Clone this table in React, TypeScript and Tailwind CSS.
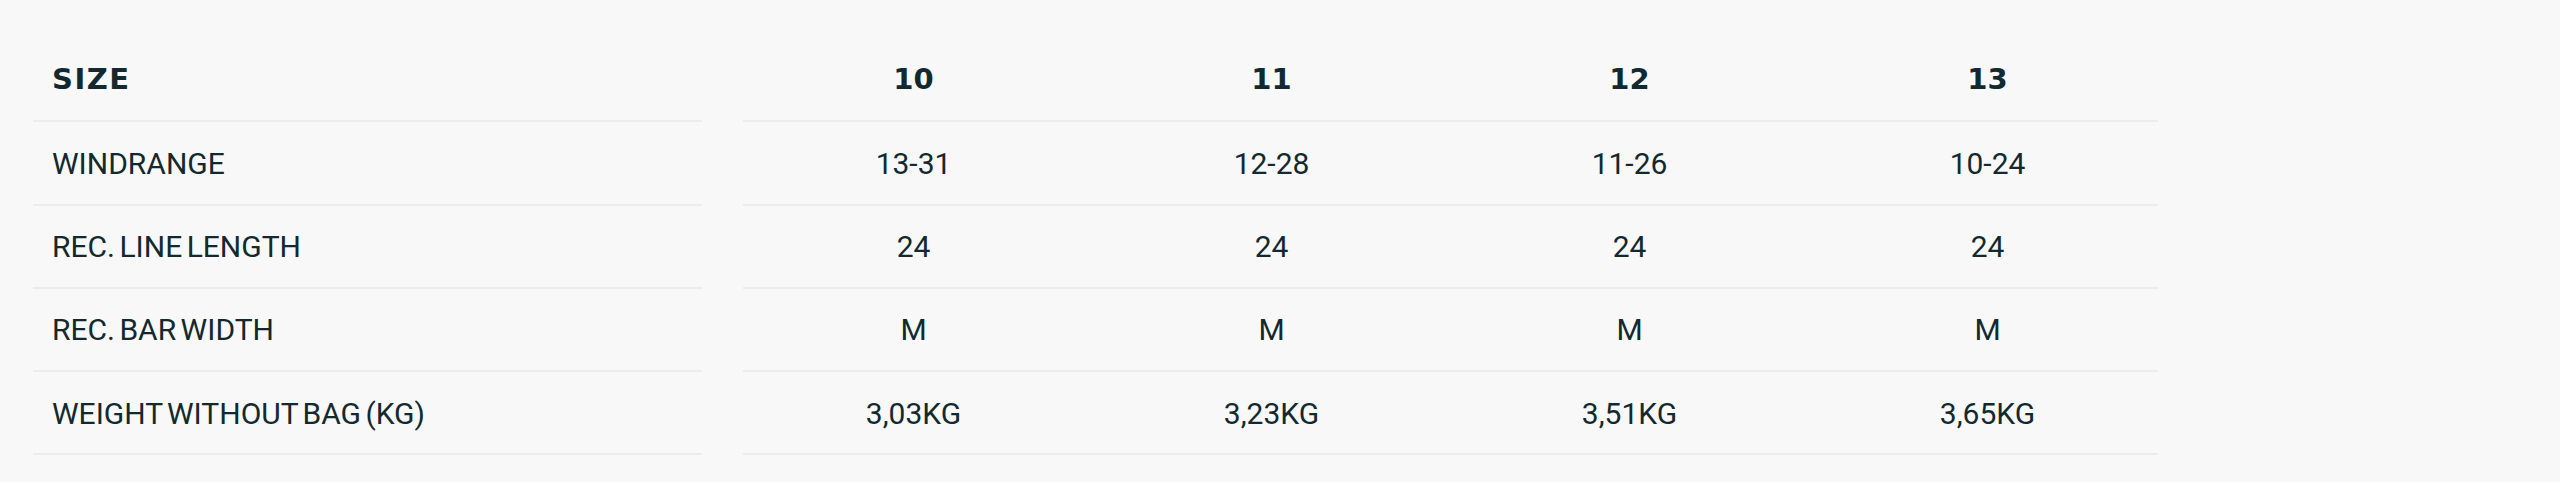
import React from "react";

const sizes = ["10", "11", "12", "13"];
const rows: { label: string; values: string[] }[] = [
  { label: "WINDRANGE", values: ["13-31", "12-28", "11-26", "10-24"] },
  { label: "REC. LINE LENGTH", values: ["24", "24", "24", "24"] },
  { label: "REC. BAR WIDTH", values: ["M", "M", "M", "M"] },
  { label: "WEIGHT WITHOUT BAG (KG)", values: ["3,03KG", "3,23KG", "3,51KG", "3,65KG"] },
];

export default function App() {
  return (
    <div className="min-h-[482px] w-[2560px] bg-[#f8f8f8] pt-[39px] pl-[33px] text-[#12292f]">
      <div className="flex h-[83.25px]">
        <div className="flex w-[669px] items-center border-b-2 border-[#ececec] pl-[19px] font-['DejaVu_Sans',sans-serif] text-[29px] font-bold tracking-[1.5px]">
          SIZE
        </div>
        <div className="ml-[41px] w-[1415px] border-b-2 border-[#ececec]">
          <div className="-mx-[8.5px] flex h-full">
            {sizes.map((s) => (
              <div
                key={s}
                className="flex flex-1 items-center justify-center font-['DejaVu_Sans',sans-serif] text-[29px] font-bold"
              >
                {s}
              </div>
            ))}
          </div>
        </div>
      </div>
      {rows.map((r) => (
        <div
          key={r.label}
          className="flex h-[83.25px] font-['Roboto',sans-serif] text-[30px] [word-spacing:-3px]"
        >
          <div className="flex w-[669px] items-center border-b-2 border-[#ececec] pl-[19px] pt-[1px]">
            {r.label}
          </div>
          <div className="ml-[41px] w-[1415px] border-b-2 border-[#ececec]">
            <div className="-mx-[8.5px] flex h-full">
              {r.values.map((v, i) => (
                <div key={i} className="flex flex-1 items-center justify-center pt-[1px]">
                  {v}
                </div>
              ))}
            </div>
          </div>
        </div>
      ))}
    </div>
  );
}
